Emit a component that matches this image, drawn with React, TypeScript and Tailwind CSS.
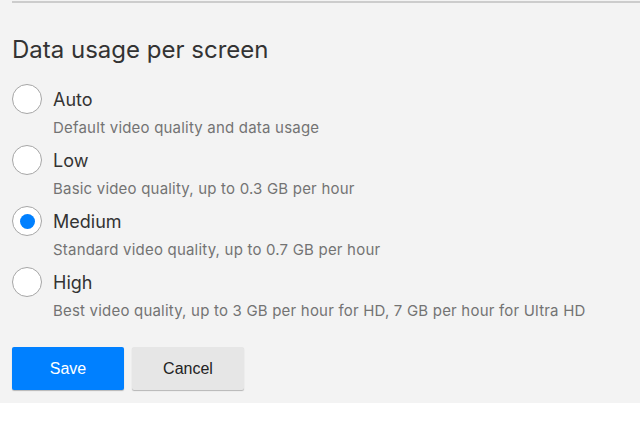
import React, { useState } from 'react';

const options = [
  { id: 'auto', label: 'Auto', desc: 'Default video quality and data usage' },
  { id: 'low', label: 'Low', desc: 'Basic video quality, up to 0.3 GB per hour' },
  { id: 'medium', label: 'Medium', desc: 'Standard video quality, up to 0.7 GB per hour' },
  { id: 'high', label: 'High', desc: 'Best video quality, up to 3 GB per hour for HD, 7 GB per hour for Ultra HD' },
];

export default function App() {
  const [selected, setSelected] = useState('medium');

  return (
    <div className="w-[640px] h-[426px] bg-white font-['Inter','Liberation_Sans',sans-serif]">
      <div className="h-[403px] bg-[#f3f3f3] pt-px">
        {/* divider */}
        <div className="ml-3 h-[2px] bg-[#cccccc]" />

        <h2 className="mt-[33px] ml-3 text-[24px] leading-[28px] text-[#333]">Data usage per screen</h2>

        <div className="mt-[19px] flex flex-col">
          {options.map(o => (
            <label key={o.id} className="flex flex-col cursor-pointer h-[61px]" onClick={() => setSelected(o.id)}>
              <div className="flex items-center h-[32px] pl-3">
                <span className="w-[30px] h-[30px] rounded-full bg-white border border-[#a6a6a6] flex items-center justify-center shrink-0">
                  {selected === o.id && <span className="w-[15px] h-[15px] rounded-full bg-[#0080ff]" />}
                </span>
                <span className="ml-[11px] text-[18px] text-[#333]">{o.label}</span>
              </div>
              <span className="mt-[3px] pl-[53px] text-[15px] leading-[20px] tracking-[0.2px] text-[#737373]">{o.desc}</span>
            </label>
          ))}
        </div>

        <div className="mt-[20px] ml-3 flex gap-2">
          <button className="w-[112px] h-[43px] rounded-[2px] bg-[#0080ff] text-white text-[16px] shadow-[0_1px_1px_rgba(0,0,0,0.25)] font-['Liberation_Sans',sans-serif]">Save</button>
          <button className="w-[112px] h-[43px] rounded-[2px] bg-[#e6e6e6] text-[#222] text-[16px] shadow-[0_1px_1px_rgba(0,0,0,0.25)] font-['Liberation_Sans',sans-serif]">Cancel</button>
        </div>
      </div>
    </div>
  );
}
